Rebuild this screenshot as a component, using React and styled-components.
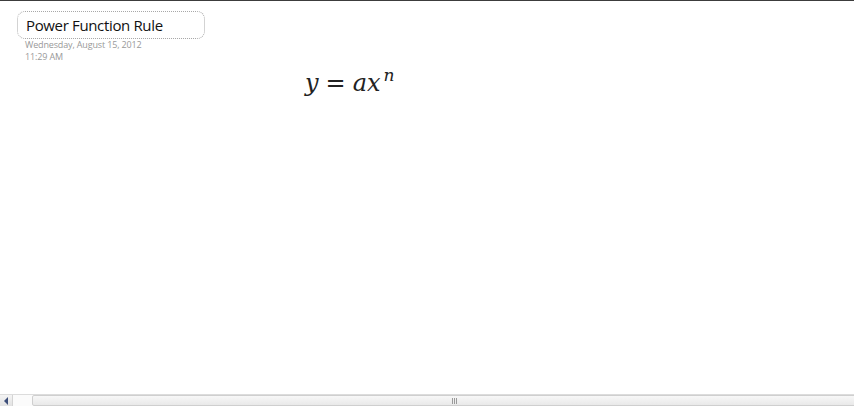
import React from "react";
import styled, { createGlobalStyle } from "styled-components";

const Global = createGlobalStyle`
  html, body { margin: 0; padding: 0; background: #fff; }
  body { width: 854px; height: 406px; overflow: hidden; }
`;

const Page = styled.div`
  width: 854px;
  height: 406px;
  display: flex;
  flex-direction: column;
  border-top: 1px solid #3c3c3c;
  box-sizing: border-box;
  font-family: "Open Sans", "Noto Sans", sans-serif;
`;

const Canvas = styled.div`
  flex: 1;
  position: relative;
`;

const Header = styled.div`
  position: absolute;
  left: 17px;
  top: 10px;
`;

const TitleBox = styled.div`
  width: 188px;
  height: 28px;
  box-sizing: border-box;
  border: 1px dotted #a8a8a8;
  border-radius: 8px;
  padding: 0 0 0 8px;
  display: flex;
  align-items: center;
  font-size: 15px;
  color: #111;
  letter-spacing: -0.35px;
`;

const Meta = styled.div`
  padding-left: 8px;
  font-size: 9px;
  line-height: 12px;
  color: #999;
  letter-spacing: -0.15px;
`;

const MetaLine = styled.div`
  height: 12px;
  white-space: nowrap;
`;

const Formula = styled.div`
  position: absolute;
  left: 305px;
  top: 65px;
  font-family: "DejaVu Serif", "Liberation Serif", serif;
  font-style: italic;
  font-size: 24px;
  color: #222;
  white-space: nowrap;
`;

const Eq = styled.span`
  font-style: normal;
  margin: 0 7px;
`;

const Sup = styled.sup`
  font-size: 17px;
  position: relative;
  top: -1px;
  margin-left: 3px;
`;

const ScrollBar = styled.div`
  height: 11px;
  display: flex;
  align-items: stretch;
  background: #fbfbfb;
  border-top: 1px solid #dcdcdc;
  overflow: hidden;
`;

const ArrowBtn = styled.div`
  width: 12px;
  flex-shrink: 0;
  display: flex;
  align-items: center;
  justify-content: center;
  background: linear-gradient(#f4f4f4, #e2e2e2);
  border-right: 1px solid #d4d4d4;
`;

const Arrow = styled.div`
  width: 0;
  height: 0;
  border-top: 4px solid transparent;
  border-bottom: 4px solid transparent;
  border-right: 4px solid #3d4f7a;
`;

const Gap = styled.div`
  width: 19px;
  flex-shrink: 0;
`;

const Thumb = styled.div`
  width: 844px;
  flex-shrink: 0;
  box-sizing: border-box;
  border: 1px solid #cfcfcf;
  border-radius: 2px;
  background: linear-gradient(#f7f7f7, #e9e9e9);
  display: flex;
  align-items: center;
  justify-content: center;
`;

const Grip = styled.div`
  width: 5px;
  height: 6px;
  background: repeating-linear-gradient(90deg, #9a9a9a 0 1px, transparent 1px 2px);
`;

export default function App() {
  return (
    <>
      <Global />
      <Page>
        <Canvas>
          <Header>
            <TitleBox>Power Function Rule</TitleBox>
            <Meta>
              <MetaLine>Wednesday, August 15, 2012</MetaLine>
              <MetaLine>11:29 AM</MetaLine>
            </Meta>
          </Header>
          <Formula>
            y<Eq>=</Eq>ax<Sup>n</Sup>
          </Formula>
        </Canvas>
        <ScrollBar>
          <ArrowBtn>
            <Arrow />
          </ArrowBtn>
          <Gap />
          <Thumb>
            <Grip />
          </Thumb>
        </ScrollBar>
      </Page>
    </>
  );
}
